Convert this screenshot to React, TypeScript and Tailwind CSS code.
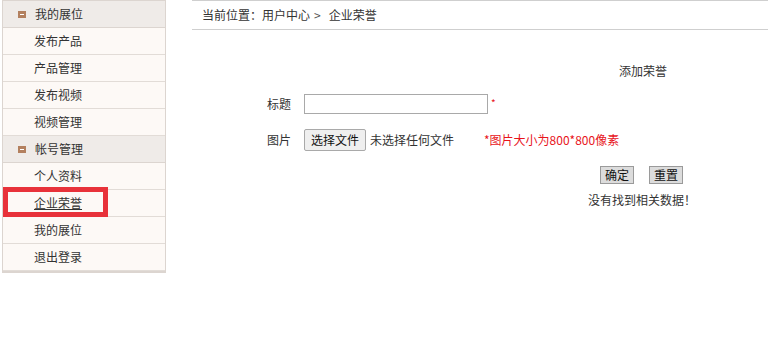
import React from "react";

type MenuGroup = { title: string; items: string[] };

const groups: MenuGroup[] = [
  { title: "我的展位", items: ["发布产品", "产品管理", "发布视频", "视频管理"] },
  { title: "帐号管理", items: ["个人资料", "企业荣誉", "我的展位", "退出登录"] },
];

const font = { fontFamily: '"Noto Sans CJK SC", "Liberation Sans", sans-serif' };

function GroupIcon() {
  return (
    <span className="flex h-[7px] w-[8px] items-center justify-center bg-[#b3805f]">
      <span className="h-[1px] w-[4px] bg-white" />
    </span>
  );
}

function Sidebar() {
  return (
    <aside className="relative ml-[2px] w-[164px] shrink-0 border-x border-t border-b-2 border-[#dcd5d0] bg-[#fdf9f6]">
      {groups.map((g) => (
        <div key={g.title}>
          <div className="flex h-[27px] items-center gap-[9px] border-b border-[#dcd5d0] bg-[#efebe8] pl-[15px] text-[12px] text-[#333]">
            <GroupIcon />
            <span>{g.title}</span>
          </div>
          {g.items.map((it) => (
            <div
              key={g.title + it}
              className={`flex h-[27px] items-center border-b border-[#e2dcd7] pl-[31px] text-[12px] text-[#333] ${
                it === "企业荣誉" ? "underline" : ""
              }`}
            >
              {it}
            </div>
          ))}
        </div>
      ))}
      {/* highlight box over the active item */}
      <div className="pointer-events-none absolute left-[0px] top-[186px] h-[30px] w-[105px] border-[5px] border-[#e8323a]" />
    </aside>
  );
}

function MainPanel() {
  return (
    <main className="ml-[26px] flex-1 text-[12px] text-[#333]">
      <div className="flex h-[30px] items-center border-y border-[#cfcfcf] pl-[10px] text-[12px]">
        <span>当前位置：用户中心</span>
        <span className="ml-[4px] mr-[8px] text-[#555]">&gt;</span>
        <span>企业荣誉</span>
      </div>

      <div className="ml-[401px] mt-[32px] w-[100px] text-center">添加荣誉</div>

      <div className="mt-[14px] flex h-[20px] items-center">
        <span className="ml-[75px] w-[37px]">标题</span>
        <div className="h-[20px] w-[184px] border border-[#a9a9a9] bg-white" />
        <span className="ml-[3px] -mt-[4px] text-[10px] text-[#e8141b]">*</span>
      </div>

      <div className="mt-[15px] flex h-[22px] items-center">
        <span className="ml-[75px] w-[37px]">图片</span>
        <button className="h-[22px] w-[62px] rounded-[2px] border border-[#a9a9a9] bg-[#efefef] text-[12px] text-[#111]">
          选择文件
        </button>
        <span className="ml-[4px] text-[12px]">未选择任何文件</span>
        <span className="ml-[30px] text-[12px] text-[#e8141b]">*图片大小为800*800像素</span>
      </div>

      <div className="ml-[408px] mt-[15px] flex gap-[15px]">
        <button className="h-[18px] w-[34px] border border-[#9a9a9a] bg-[#dcdcdc] text-[12px] leading-none text-[#111]">
          确定
        </button>
        <button className="h-[18px] w-[34px] border border-[#9a9a9a] bg-[#dcdcdc] text-[12px] leading-none text-[#111]">
          重置
        </button>
      </div>

      <div className="ml-[396px] mt-[7px]">没有找到相关数据！</div>
    </main>
  );
}

export default function App() {
  return (
    <div className="flex h-[340px] w-[768px] bg-white" style={font}>
      <div className="self-start">
        <Sidebar />
      </div>
      <MainPanel />
    </div>
  );
}
